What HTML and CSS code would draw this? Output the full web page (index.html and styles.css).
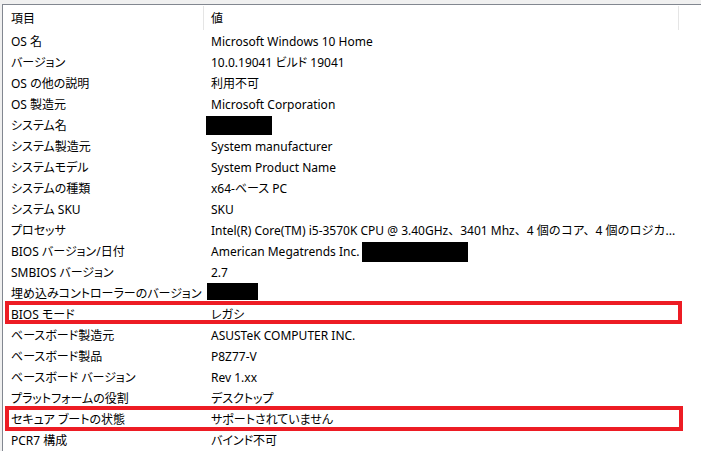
FILE: index.html
```html
<!DOCTYPE html>
<html lang="ja">
<head>
<meta charset="utf-8">
<title>システム情報</title>
<link rel="stylesheet" href="styles.css">
</head>
<body>
<div class="panel">
  <div class="header">
    <div class="hcell first"><span>項目</span></div>
    <div class="hcell sep"><span>値</span></div>
    <div class="hcell sep"></div>
  </div>
  <div class="rows">
    <div class="row"><div class="k">OS 名</div><div class="v">Microsoft Windows 10 Home</div></div>
    <div class="row"><div class="k">バージョン</div><div class="v">10.0.19041 ビルド 19041</div></div>
    <div class="row"><div class="k">OS の他の説明</div><div class="v">利用不可</div></div>
    <div class="row"><div class="k">OS 製造元</div><div class="v">Microsoft Corporation</div></div>
    <div class="row"><div class="k">システム名</div><div class="v"><span class="redact r1"></span></div></div>
    <div class="row"><div class="k">システム製造元</div><div class="v">System manufacturer</div></div>
    <div class="row"><div class="k">システムモデル</div><div class="v">System Product Name</div></div>
    <div class="row"><div class="k">システムの種類</div><div class="v">x64-ベース PC</div></div>
    <div class="row"><div class="k">システム SKU</div><div class="v">SKU</div></div>
    <div class="row"><div class="k">プロセッサ</div><div class="v wide">Intel(R) Core(TM) i5-3570K CPU @ 3.40GHz、3401 Mhz、4 個のコア、4 個のロジカ...</div></div>
    <div class="row"><div class="k">BIOS バージョン/日付</div><div class="v">American Megatrends Inc. <span class="redact r2"></span></div></div>
    <div class="row"><div class="k">SMBIOS バージョン</div><div class="v">2.7</div></div>
    <div class="row"><div class="k">埋め込みコントローラーのバージョン</div><div class="v"><span class="redact r3"></span></div></div>
    <div class="row mark"><div class="k">BIOS モード</div><div class="v">レガシ</div></div>
    <div class="row"><div class="k">ベースボード製造元</div><div class="v">ASUSTeK COMPUTER INC.</div></div>
    <div class="row"><div class="k">ベースボード製品</div><div class="v">P8Z77-V</div></div>
    <div class="row"><div class="k">ベースボード バージョン</div><div class="v">Rev 1.xx</div></div>
    <div class="row"><div class="k">プラットフォームの役割</div><div class="v">デスクトップ</div></div>
    <div class="row mark mark2"><div class="k">セキュア ブートの状態</div><div class="v">サポートされていません</div></div>
    <div class="row"><div class="k">PCR7 構成</div><div class="v">バインド不可</div></div>
  </div>
</div>
</body>
</html>
```

FILE: styles.css
```css
html, body {
  margin: 0;
  padding: 0;
  background: #f0f0f0;
  height: 100%;
  overflow: hidden;
}
body {
  padding: 4px 0 0 2px;
  font-family: "Noto Sans", "Noto Sans CJK JP", sans-serif;
  font-size: 12px;
  color: #000;
  font-feature-settings: "palt" 1;
}
.panel {
  background: #fff;
  border-top: 1px solid #828790;
  border-left: 1px solid #828790;
  height: 460px;
}
.header {
  display: grid;
  grid-template-columns: 200px 475px 1fr;
  height: 26px;
}
.hcell {
  display: flex;
  align-items: center;
  padding-left: 8px;
  box-sizing: border-box;
  margin-top: 1px;
  height: 24px;
}
.hcell.sep {
  border-left: 1px solid #e5e5e5;
  padding-left: 7px;
}
.rows {
  display: flex;
  flex-direction: column;
}
.row {
  position: relative;
  display: grid;
  grid-template-columns: 200px 1fr;
  height: 21px;
  align-items: center;
}
.k, .v {
  padding-left: 8px;
  white-space: nowrap;
  overflow: hidden;
  line-height: 21px;
  height: 21px;
}
.v {
  display: flex;
  align-items: center;
}
.v.wide {
  font-feature-settings: normal;
  display: block;
}
.redact {
  display: inline-block;
  background: #000;
}
.r1 { width: 66px; height: 19px; margin-left: -5px; }
.r2 { width: 106px; height: 20px; margin-left: 3px; }
.r3 { width: 51px; height: 17px; margin-left: -4px; margin-top: -4px; }
.mark::after {
  content: "";
  position: absolute;
  left: 2px;
  top: -3px;
  width: 669px;
  height: 15px;
  border: 4px solid #ed1c24;
}
.mark2::after {
  top: -3px;
  height: 17px;
  width: 670px;
}
```
